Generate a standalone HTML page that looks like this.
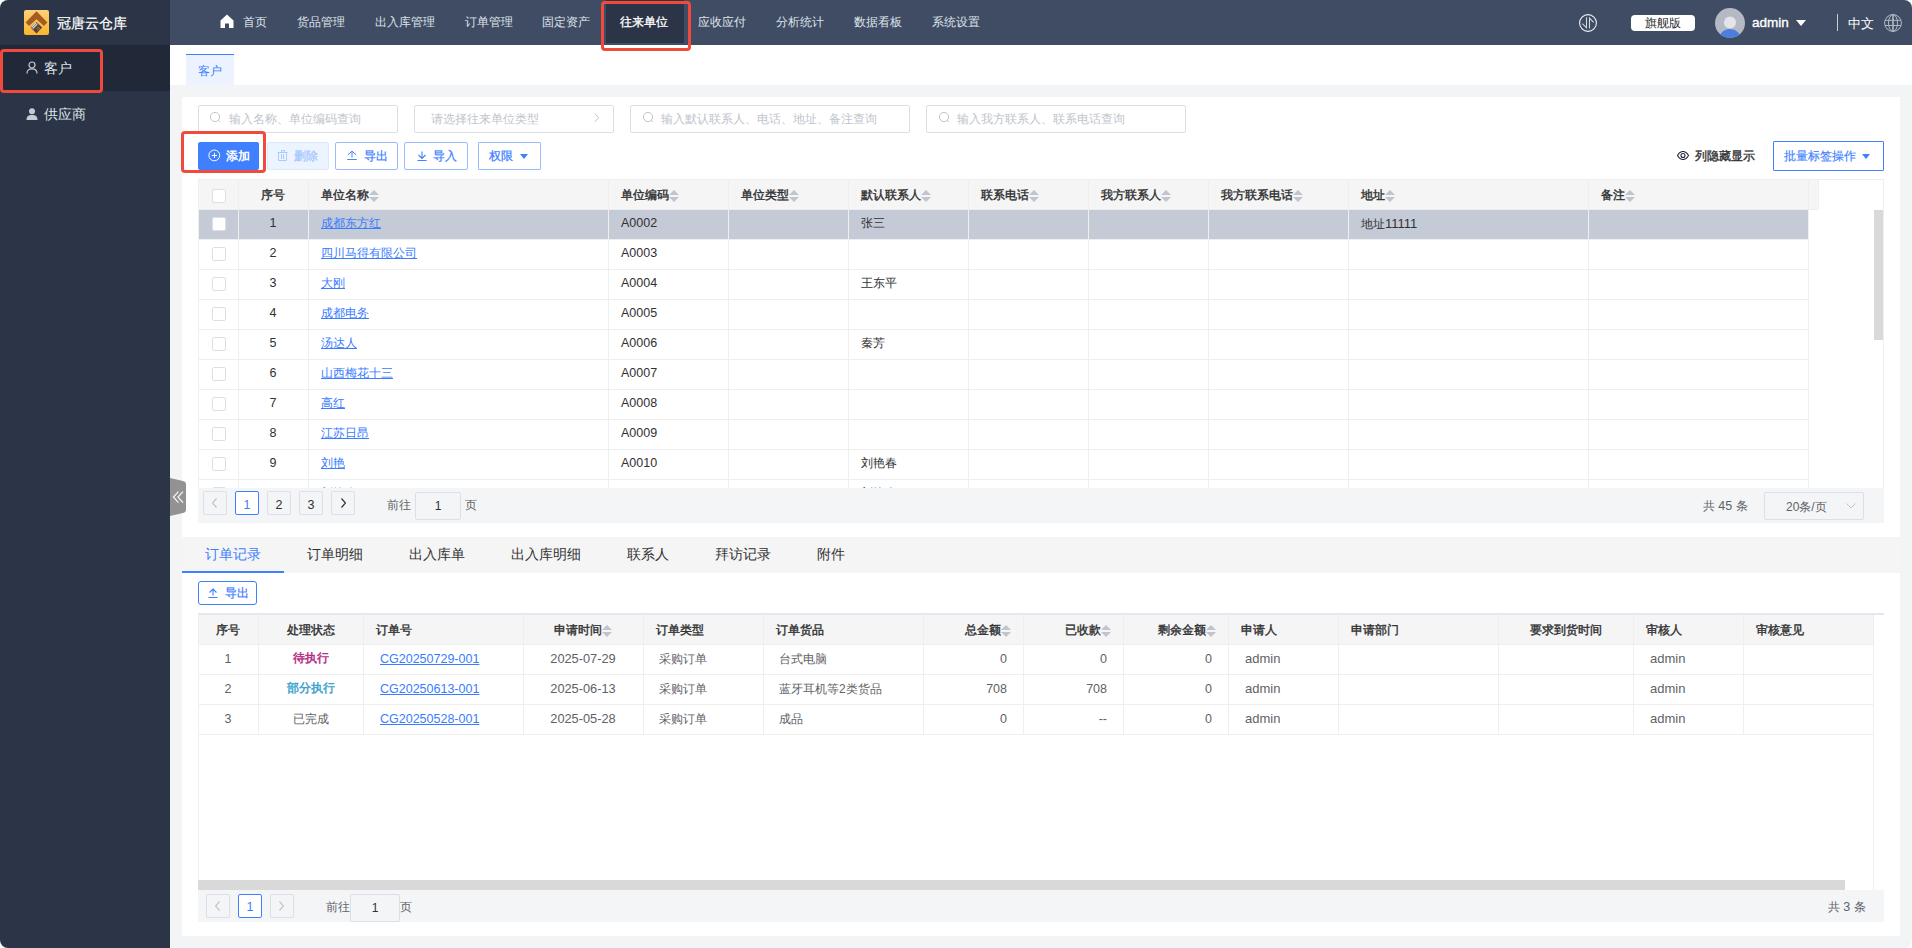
<!DOCTYPE html><html><head><meta charset="utf-8"><style>
*{box-sizing:border-box;margin:0;padding:0}
html,body{width:1912px;height:948px;overflow:hidden;background:#fff}
body{font-family:"Liberation Sans",sans-serif;font-size:12px;color:#303133;position:relative}
.ab{position:absolute}
.win{position:absolute;left:0;top:0;width:1912px;height:948px;border-radius:8px;overflow:hidden;background:#f3f4f6}
.t{position:absolute;white-space:nowrap}
.nav{position:absolute;top:0;height:45px;line-height:45px;font-size:12px;color:#dfe3ea}
.inp{position:absolute;top:105px;height:28px;border:1px solid #dcdfe6;border-radius:2px;background:#fff;color:#c0c4cc;font-size:12px;line-height:26px}
.btn{position:absolute;top:142px;height:28px;border:1px solid #9abbff;border-radius:2px;background:#fff;color:#4080ff;font-size:12px;line-height:26px}
.hd{position:absolute;-webkit-text-stroke:0.4px #303133;font-size:12px;color:#303133;white-space:nowrap}
.caret{display:inline-block;width:10px;height:14px;position:relative;vertical-align:middle;margin-top:-2px}
.caret:before{content:"";position:absolute;left:0;top:2px;border:5px solid transparent;border-bottom-color:#c0c4cc;border-top-width:0}
.caret:after{content:"";position:absolute;left:0;top:9px;border:5px solid transparent;border-top-color:#c0c4cc;border-bottom-width:0}
.vl{position:absolute;width:1px;background:#efefef}
.hl{position:absolute;height:1px;background:#efefef}
.cb{position:absolute;width:14px;height:14px;border:1px solid #dcdfe6;border-radius:2px;background:#fff}
.lnk{color:#3a7cff;text-decoration:underline}
.pg{position:absolute;height:23px;border:1px solid #dcdfe6;border-radius:2px;text-align:center;line-height:21px;font-size:12px;color:#303133}
.md{-webkit-text-stroke:0.25px currentColor}
.red{position:absolute;border:3px solid #ef4a3c;border-radius:4px}
</style></head><body><div class="win">
<div class="ab" style="left:0;top:0;width:170px;height:948px;background:#2c3547"></div>
<svg class="ab" style="left:24px;top:10px" width="25" height="25" viewBox="0 0 25 25">
<defs><linearGradient id="lg" x1="0" y1="0" x2="0" y2="1"><stop offset="0" stop-color="#fdd07a"/><stop offset="1" stop-color="#fbb52c"/></linearGradient></defs>
<rect x="0" y="0" width="25" height="25" rx="2" fill="url(#lg)"/>
<path d="M12.5 1.3 L23.4 12.4 L19.9 16 L12.5 9.2 L5.1 16 L1.6 12.4 Z" fill="#a65a24"/>
<path d="M12.5 12 L18.2 17.5 L12.5 23.4 L6.7 17.5 Z" fill="#5e4030"/>
<path d="M6.7 17.5 L12.5 12 L14.6 14.1 L8.9 19.7 Z" fill="#8a8580"/>
<path d="M8 16.8 L12 13 M9 18.2 L13 14.4" stroke="#f2f0ee" stroke-width="0.9"/>
<path d="M12.5 19 L15 16.5 M13.5 20.5 L16 18" stroke="#b59f90" stroke-width="0.7"/>
</svg>
<div class="t" style="left:57px;top:13px;font-size:14px;line-height:20px;color:#fff;-webkit-text-stroke:0.2px #fff">冠唐云仓库</div>
<div class="ab" style="left:0;top:45px;width:170px;height:46px;background:#212939"></div>
<svg class="ab" style="left:26px;top:61px" width="12" height="13" viewBox="0 0 12 13"><circle cx="6" cy="4" r="3" fill="none" stroke="#c6cbd4" stroke-width="1.2"/><path d="M1 12.5 C1 9 3 7.8 6 7.8 C9 7.8 11 9 11 12.5" fill="none" stroke="#c6cbd4" stroke-width="1.2"/></svg>
<div class="t" style="left:44px;top:58px;font-size:14px;line-height:20px;color:#dfe3ea">客户</div>
<svg class="ab" style="left:26px;top:108px" width="12" height="12" viewBox="0 0 12 12"><circle cx="6" cy="3.3" r="3" fill="#c6cbd4"/><path d="M0.5 12 C0.5 8.3 2.5 7 6 7 C9.5 7 11.5 8.3 11.5 12 Z" fill="#c6cbd4"/></svg>
<div class="t" style="left:44px;top:104px;font-size:14px;line-height:20px;color:#dfe3ea">供应商</div>
<div class="ab" style="left:170px;top:0;width:1742px;height:45px;background:#3f4c64"></div>
<div class="ab" style="left:606px;top:0;width:78px;height:43px;background:#2c3547"></div>
<svg class="ab" style="left:220px;top:14px" width="14" height="14" viewBox="0 0 14 14"><path d="M7 0.5 L13.5 6.5 L13.5 14 L9 14 L9 9.5 L5 9.5 L5 14 L0.5 14 L0.5 6.5 Z" fill="#fff"/></svg>
<div class="nav" style="left:243px;color:#dfe3ea">首页</div>
<div class="nav" style="left:297px;color:#dfe3ea">货品管理</div>
<div class="nav" style="left:375px;color:#dfe3ea">出入库管理</div>
<div class="nav" style="left:465px;color:#dfe3ea">订单管理</div>
<div class="nav" style="left:542px;color:#dfe3ea">固定资产</div>
<div class="nav" style="left:620px;color:#fff;-webkit-text-stroke:0.3px #fff">往来单位</div>
<div class="nav" style="left:698px;color:#dfe3ea">应收应付</div>
<div class="nav" style="left:776px;color:#dfe3ea">分析统计</div>
<div class="nav" style="left:854px;color:#dfe3ea">数据看板</div>
<div class="nav" style="left:932px;color:#dfe3ea">系统设置</div>
<svg class="ab" style="left:1579px;top:14px" width="18" height="18" viewBox="0 0 18 18"><circle cx="9" cy="9" r="8.4" fill="none" stroke="#f0f2f5" stroke-width="1.1"/><path d="M3.4 9.6 L7.5 13.8 V3.3 M10.5 14.6 V4.1 L14.6 8.3" fill="none" stroke="#d6dae0" stroke-width="1.05"/></svg>
<div class="ab" style="left:1631px;top:15px;width:64px;height:16px;background:#fff;border-radius:4px;text-align:center;line-height:16px;font-size:12px;color:#303133">旗舰版</div>
<svg class="ab" style="left:1715px;top:8px" width="30" height="30" viewBox="0 0 30 30"><defs><clipPath id="av"><circle cx="15" cy="15" r="15"/></clipPath></defs><circle cx="15" cy="15" r="15" fill="#b4b9c4"/><g clip-path="url(#av)"><circle cx="15" cy="14.5" r="6" fill="#e4e5ea"/><ellipse cx="15" cy="31.5" rx="11" ry="10.5" fill="#4a7fe0"/></g></svg>
<div class="t" style="left:1752px;top:13px;font-size:13.5px;line-height:20px;color:#fff;-webkit-text-stroke:0.35px #fff">admin</div>
<div class="ab" style="left:1796px;top:20px;width:0;height:0;border-left:5px solid transparent;border-right:5px solid transparent;border-top:6px solid #fff"></div>
<div class="ab" style="left:1837px;top:14px;width:1px;height:17px;background:#c8ccd4"></div>
<div class="t" style="left:1848px;top:13.5px;font-size:13px;line-height:20px;color:#fff">中文</div>
<svg class="ab" style="left:1884px;top:14px" width="18" height="18" viewBox="0 0 18 18" fill="none" stroke="#b3b9c4" stroke-width="1"><circle cx="9" cy="9" r="8.4"/><ellipse cx="9" cy="9" rx="4.5" ry="8.4"/><path d="M9 0.6 V17.4" stroke-width="1.6"/><path d="M1.2 6.3 H16.8 M1.2 11.5 H16.8"/></svg>
<div class="ab" style="left:170px;top:45px;width:1742px;height:40px;background:#fff"></div>
<div class="ab" style="left:186px;top:54px;width:48px;height:31px;background:#ecf3fe;border-top:1.3px solid #4080ff;text-align:center;line-height:33px;font-size:12px;color:#4080ff">客户</div>
<div class="ab" style="left:182px;top:97px;width:1718px;height:839px;background:#fff"></div>
<div class="inp" style="left:198px;width:200px"></div>
<svg class="ab" style="left:210px;top:112px" width="12" height="12" viewBox="0 0 12 12" fill="none" stroke="#c0c4cc" stroke-width="1"><circle cx="5" cy="5" r="4.6"/><path d="M8.3 8.3 L10 10"/></svg>
<div class="t" style="left:229px;top:105px;line-height:28px;color:#c0c4cc">输入名称、单位编码查询</div>
<div class="inp" style="left:414px;width:200px"></div>
<div class="t" style="left:431px;top:105px;line-height:28px;color:#c0c4cc">请选择往来单位类型</div>
<svg class="ab" style="left:594px;top:113px" width="6" height="10" viewBox="0 0 6 10" fill="none" stroke="#c0c4cc" stroke-width="1"><path d="M0.6 0.5 L4.9 4.7 L0.6 8.9"/></svg>
<div class="inp" style="left:630px;width:280px"></div>
<svg class="ab" style="left:643px;top:112px" width="12" height="12" viewBox="0 0 12 12" fill="none" stroke="#c0c4cc" stroke-width="1"><circle cx="5" cy="5" r="4.6"/><path d="M8.3 8.3 L10 10"/></svg>
<div class="t" style="left:661px;top:105px;line-height:28px;color:#c0c4cc">输入默认联系人、电话、地址、备注查询</div>
<div class="inp" style="left:926px;width:260px"></div>
<svg class="ab" style="left:939px;top:112px" width="12" height="12" viewBox="0 0 12 12" fill="none" stroke="#c0c4cc" stroke-width="1"><circle cx="5" cy="5" r="4.6"/><path d="M8.3 8.3 L10 10"/></svg>
<div class="t" style="left:957px;top:105px;line-height:28px;color:#c0c4cc">输入我方联系人、联系电话查询</div>
<div class="btn" style="left:198px;width:61px;background:#4080ff;border-color:#4080ff"></div>
<svg class="ab" style="left:208px;top:149px" width="13" height="13" viewBox="0 0 13 13" fill="none" stroke="#fff" stroke-width="1"><circle cx="6.3" cy="6.4" r="5.4"/><path d="M6.5 3.8 V9 M3.8 6.5 H9"/></svg>
<div class="t" style="left:226px;top:142px;line-height:28px;color:#fff;font-weight:bold">添加</div>
<div class="btn" style="left:267px;width:62px;background:#ecf4ff;border-color:#d9e8ff"></div>
<svg class="ab" style="left:277px;top:150px" width="12" height="12" viewBox="0 0 12 12" fill="none" stroke="#a8ccff" stroke-width="1"><path d="M0.7 2.5 H10.6 M4.5 2.5 V0.5 H7.5 V2.5 M1.5 2.5 V10.5 H9.5 V2.5 M4.5 4 V9 M6.5 4 V9"/></svg>
<div class="t" style="left:294px;top:142px;line-height:28px;color:#a3c5ff;-webkit-text-stroke:0.25px currentColor">删除</div>
<div class="btn" style="left:335px;width:63px"></div>
<svg class="ab" style="left:347px;top:150px" width="10" height="10" viewBox="0 0 10 10" fill="none" stroke="#4080ff" stroke-width="0.95"><path d="M1 4.6 L5 1.2 L9 4.6 M5 1.2 V7.6 M0.2 9.5 H9.8"/></svg>
<div class="t" style="left:364px;top:142px;line-height:28px;color:#4080ff;-webkit-text-stroke:0.25px currentColor">导出</div>
<div class="btn" style="left:404px;width:64px"></div>
<svg class="ab" style="left:417px;top:151px" width="10" height="10" viewBox="0 0 10 10" fill="none" stroke="#4080ff" stroke-width="1.1"><path d="M1.5 4 L5 7.5 L8.5 4 M5 0.5 V7.5 M0.5 9.5 H9.5"/></svg>
<div class="t" style="left:433px;top:142px;line-height:28px;color:#4080ff;-webkit-text-stroke:0.25px currentColor">导入</div>
<div class="btn" style="left:478px;width:63px;border-radius:1px"></div>
<div class="t" style="left:489px;top:142px;line-height:28px;color:#4080ff;-webkit-text-stroke:0.25px currentColor">权限</div>
<div class="ab" style="left:520px;top:154px;border-left:4px solid transparent;border-right:4px solid transparent;border-top:5px solid #4080ff"></div>
<svg class="ab" style="left:1677px;top:151px" width="12" height="9" viewBox="0 0 12 9" fill="none" stroke="#1f2533" stroke-width="1.1"><path d="M0.5 4.5 C2.5 1 4 0.5 6 0.5 C8 0.5 9.5 1 11.5 4.5 C9.5 8 8 8.5 6 8.5 C4 8.5 2.5 8 0.5 4.5 Z"/><circle cx="6" cy="4.5" r="2"/></svg>
<div class="t" style="left:1695px;top:142px;line-height:28px;color:#303133;-webkit-text-stroke:0.35px currentColor">列隐藏显示</div>
<div class="btn" style="left:1773px;top:141px;height:30px;width:111px;border-radius:1px;border-color:#4080ff"></div>
<div class="t" style="left:1784px;top:142px;line-height:28px;color:#4080ff;-webkit-text-stroke:0.15px currentColor">批量标签操作</div>
<div class="ab" style="left:1862px;top:154px;border-left:4px solid transparent;border-right:4px solid transparent;border-top:5px solid #4080ff"></div>
<div class="ab" style="left:198px;top:179px;width:1620px;height:31px;background:#f5f5f5"></div>
<div class="ab" style="left:1818px;top:179px;width:65px;height:31px;background:#fff"></div>
<div class="ab" style="left:1883px;top:179px;width:1px;height:309px;background:#ebeef5"></div>
<div class="ab" style="left:198px;top:210px;width:1610px;height:29px;background:#c4cad6"></div>
<div class="ab" style="left:198px;top:179px;width:1685px;height:309px;overflow:hidden">
<div class="hl" style="left:0;top:30px;width:1610px"></div>
<div class="hl" style="left:0;top:60px;width:1610px"></div>
<div class="hl" style="left:0;top:90px;width:1610px"></div>
<div class="hl" style="left:0;top:120px;width:1610px"></div>
<div class="hl" style="left:0;top:150px;width:1610px"></div>
<div class="hl" style="left:0;top:180px;width:1610px"></div>
<div class="hl" style="left:0;top:210px;width:1610px"></div>
<div class="hl" style="left:0;top:240px;width:1610px"></div>
<div class="hl" style="left:0;top:270px;width:1610px"></div>
<div class="hl" style="left:0;top:300px;width:1610px"></div>
<div class="hl" style="left:0;top:330px;width:1610px"></div>
<div class="vl" style="left:0px;top:0;height:309px"></div>
<div class="vl" style="left:40px;top:0;height:309px"></div>
<div class="vl" style="left:110px;top:0;height:309px"></div>
<div class="vl" style="left:410px;top:0;height:309px"></div>
<div class="vl" style="left:530px;top:0;height:309px"></div>
<div class="vl" style="left:650px;top:0;height:309px"></div>
<div class="vl" style="left:770px;top:0;height:309px"></div>
<div class="vl" style="left:890px;top:0;height:309px"></div>
<div class="vl" style="left:1010px;top:0;height:309px"></div>
<div class="vl" style="left:1150px;top:0;height:309px"></div>
<div class="vl" style="left:1390px;top:0;height:309px"></div>
<div class="vl" style="left:1610px;top:0;height:309px"></div>
<div class="vl" style="left:1620px;top:0;height:31px"></div>
<div class="hl" style="left:1610px;top:30px;width:11px"></div>
<div class="hl" style="left:0;top:0;width:1685px"></div>
<div class="cb" style="left:14px;top:10px"></div>
<div class="hd" style="left:40px;width:70px;text-align:center;top:1px;line-height:31px">序号</div>
<div class="hd" style="left:123px;top:1px;line-height:31px">单位名称<span class="caret"></span></div>
<div class="hd" style="left:423px;top:1px;line-height:31px">单位编码<span class="caret"></span></div>
<div class="hd" style="left:543px;top:1px;line-height:31px">单位类型<span class="caret"></span></div>
<div class="hd" style="left:663px;top:1px;line-height:31px">默认联系人<span class="caret"></span></div>
<div class="hd" style="left:783px;top:1px;line-height:31px">联系电话<span class="caret"></span></div>
<div class="hd" style="left:903px;top:1px;line-height:31px">我方联系人<span class="caret"></span></div>
<div class="hd" style="left:1023px;top:1px;line-height:31px">我方联系电话<span class="caret"></span></div>
<div class="hd" style="left:1163px;top:1px;line-height:31px">地址<span class="caret"></span></div>
<div class="hd" style="left:1403px;top:1px;line-height:31px">备注<span class="caret"></span></div>
<div class="cb" style="left:14px;top:38px"></div>
<div class="t" style="left:40px;width:70px;text-align:center;top:30px;line-height:29px;color:#303133;font-size:12.5px">1</div>
<div class="t lnk" style="left:123px;top:30px;line-height:29px">成都东方红</div>
<div class="t" style="left:423px;top:30px;line-height:29px;color:#303133;font-size:12.5px">A0002</div>
<div class="t" style="left:663px;top:30px;line-height:29px;color:#303133">张三</div>
<div class="t" style="left:1163px;top:30px;line-height:29px;color:#303133">地址<span style="font-size:13px">11111</span></div>
<div class="cb" style="left:14px;top:68px"></div>
<div class="t" style="left:40px;width:70px;text-align:center;top:60px;line-height:29px;color:#303133;font-size:12.5px">2</div>
<div class="t lnk" style="left:123px;top:60px;line-height:29px">四川马得有限公司</div>
<div class="t" style="left:423px;top:60px;line-height:29px;color:#303133;font-size:12.5px">A0003</div>
<div class="cb" style="left:14px;top:98px"></div>
<div class="t" style="left:40px;width:70px;text-align:center;top:90px;line-height:29px;color:#303133;font-size:12.5px">3</div>
<div class="t lnk" style="left:123px;top:90px;line-height:29px">大刚</div>
<div class="t" style="left:423px;top:90px;line-height:29px;color:#303133;font-size:12.5px">A0004</div>
<div class="t" style="left:663px;top:90px;line-height:29px;color:#303133">王东平</div>
<div class="cb" style="left:14px;top:128px"></div>
<div class="t" style="left:40px;width:70px;text-align:center;top:120px;line-height:29px;color:#303133;font-size:12.5px">4</div>
<div class="t lnk" style="left:123px;top:120px;line-height:29px">成都电务</div>
<div class="t" style="left:423px;top:120px;line-height:29px;color:#303133;font-size:12.5px">A0005</div>
<div class="cb" style="left:14px;top:158px"></div>
<div class="t" style="left:40px;width:70px;text-align:center;top:150px;line-height:29px;color:#303133;font-size:12.5px">5</div>
<div class="t lnk" style="left:123px;top:150px;line-height:29px">汤达人</div>
<div class="t" style="left:423px;top:150px;line-height:29px;color:#303133;font-size:12.5px">A0006</div>
<div class="t" style="left:663px;top:150px;line-height:29px;color:#303133">秦芳</div>
<div class="cb" style="left:14px;top:188px"></div>
<div class="t" style="left:40px;width:70px;text-align:center;top:180px;line-height:29px;color:#303133;font-size:12.5px">6</div>
<div class="t lnk" style="left:123px;top:180px;line-height:29px">山西梅花十三</div>
<div class="t" style="left:423px;top:180px;line-height:29px;color:#303133;font-size:12.5px">A0007</div>
<div class="cb" style="left:14px;top:218px"></div>
<div class="t" style="left:40px;width:70px;text-align:center;top:210px;line-height:29px;color:#303133;font-size:12.5px">7</div>
<div class="t lnk" style="left:123px;top:210px;line-height:29px">高红</div>
<div class="t" style="left:423px;top:210px;line-height:29px;color:#303133;font-size:12.5px">A0008</div>
<div class="cb" style="left:14px;top:248px"></div>
<div class="t" style="left:40px;width:70px;text-align:center;top:240px;line-height:29px;color:#303133;font-size:12.5px">8</div>
<div class="t lnk" style="left:123px;top:240px;line-height:29px">江苏日昂</div>
<div class="t" style="left:423px;top:240px;line-height:29px;color:#303133;font-size:12.5px">A0009</div>
<div class="cb" style="left:14px;top:278px"></div>
<div class="t" style="left:40px;width:70px;text-align:center;top:270px;line-height:29px;color:#303133;font-size:12.5px">9</div>
<div class="t lnk" style="left:123px;top:270px;line-height:29px">刘艳</div>
<div class="t" style="left:423px;top:270px;line-height:29px;color:#303133;font-size:12.5px">A0010</div>
<div class="t" style="left:663px;top:270px;line-height:29px;color:#303133">刘艳春</div>
<div class="cb" style="left:14px;top:308px"></div>
<div class="t" style="left:40px;width:70px;text-align:center;top:300px;line-height:29px;color:#303133;font-size:12.5px">10</div>
<div class="t lnk" style="left:123px;top:300px;line-height:29px">刘艳春</div>
<div class="t" style="left:423px;top:300px;line-height:29px;color:#303133;font-size:12.5px">A0011</div>
<div class="t" style="left:663px;top:300px;line-height:29px;color:#303133">刘艳春</div>
</div>
<div class="ab" style="left:1874px;top:210px;width:9px;height:130px;background:#d9d9d9"></div>
<div class="ab" style="left:198px;top:488px;width:1686px;height:35px;background:#f4f5f7"></div>
<div class="pg" style="left:203px;top:491px;width:24px;height:24px"></div><svg class="ab" style="left:211.5px;top:498px" width="5" height="10" viewBox="0 0 5 10" fill="none" stroke="#c0c4cc" stroke-width="1.2"><path d="M4.5 0.5 L0.5 5 L4.5 9.5"/></svg>
<div class="pg" style="left:235px;top:491px;width:24px;height:24px;line-height:26px;border-color:#4080ff;background:#fff;color:#4080ff;font-size:12.5px">1</div>
<div class="pg" style="left:267px;top:491px;width:24px;height:24px;line-height:26px;font-size:12.5px">2</div>
<div class="pg" style="left:299px;top:491px;width:24px;height:24px;line-height:26px;font-size:12.5px">3</div>
<div class="pg" style="left:331px;top:491px;width:24px;height:24px"></div><svg class="ab" style="left:341px;top:497.5px" width="5" height="10" viewBox="0 0 5 10" fill="none" stroke="#303133" stroke-width="1.2"><path d="M0.5 0.5 L4.5 5 L0.5 9.5"/></svg>
<div class="t" style="left:387px;top:492px;line-height:26px;color:#606266">前往</div>
<div class="pg" style="left:415px;top:492px;width:46px;height:28px;line-height:26px;background:#f4f5f7">1</div>
<div class="t" style="left:465px;top:492px;line-height:26px;color:#606266">页</div>
<div class="t" style="left:1703px;top:493px;line-height:26px;color:#606266">共 <span style="font-size:12.5px">45</span> 条</div>
<div class="pg" style="left:1764px;top:492px;width:100px;height:28px;line-height:28px;text-align:left;padding-left:21px;color:#606266">20条/页</div>
<svg class="ab" style="left:1846px;top:503px" width="10" height="6" viewBox="0 0 10 6" fill="none" stroke="#c0c4cc" stroke-width="1"><path d="M0.5 0.5 L5 5 L9.5 0.5"/></svg>
<div class="ab" style="left:182px;top:537px;width:1718px;height:36px;background:#f5f5f5"></div>
<div class="ab" style="left:182px;top:571px;width:102px;height:2px;background:#4080ff"></div>
<div class="t" style="left:182px;width:102px;text-align:center;top:537px;line-height:34px;font-size:14px;color:#4080ff">订单记录</div>
<div class="t" style="left:284px;width:102px;text-align:center;top:537px;line-height:34px;font-size:14px;color:#303133">订单明细</div>
<div class="t" style="left:386px;width:102px;text-align:center;top:537px;line-height:34px;font-size:14px;color:#303133">出入库单</div>
<div class="t" style="left:488px;width:116px;text-align:center;top:537px;line-height:34px;font-size:14px;color:#303133">出入库明细</div>
<div class="t" style="left:604px;width:88px;text-align:center;top:537px;line-height:34px;font-size:14px;color:#303133">联系人</div>
<div class="t" style="left:692px;width:102px;text-align:center;top:537px;line-height:34px;font-size:14px;color:#303133">拜访记录</div>
<div class="t" style="left:794px;width:74px;text-align:center;top:537px;line-height:34px;font-size:14px;color:#303133">附件</div>
<div class="ab" style="left:198px;top:581px;width:59px;height:24px;border:1px solid #4080ff;border-radius:3px;background:#fff"></div>
<svg class="ab" style="left:208px;top:588px" width="10" height="10" viewBox="0 0 10 10" fill="none" stroke="#4080ff" stroke-width="1.1"><path d="M1.5 4.5 L5 1 L8.5 4.5 M5 1 V7.5 M0.5 9.5 H9.5"/></svg>
<div class="t" style="left:225px;top:581px;line-height:24px;color:#4080ff;-webkit-text-stroke:0.25px currentColor">导出</div>
<div class="ab" style="left:198px;top:613px;width:1676px;height:277px;border:1px solid #ebeef5;border-bottom:none"></div>
<div class="ab" style="left:198px;top:613px;width:1686px;height:2px;background:#e4e7ef"></div>
<div class="ab" style="left:199px;top:615px;width:1674px;height:29px;background:#f5f5f5"></div>
<div class="hl" style="left:198px;top:644px;width:1675px"></div>
<div class="hl" style="left:198px;top:674px;width:1675px"></div>
<div class="hl" style="left:198px;top:704px;width:1675px"></div>
<div class="hl" style="left:198px;top:734px;width:1675px"></div>
<div class="vl" style="left:258px;top:614px;height:120px"></div>
<div class="vl" style="left:363px;top:614px;height:120px"></div>
<div class="vl" style="left:523px;top:614px;height:120px"></div>
<div class="vl" style="left:643px;top:614px;height:120px"></div>
<div class="vl" style="left:763px;top:614px;height:120px"></div>
<div class="vl" style="left:923px;top:614px;height:120px"></div>
<div class="vl" style="left:1023px;top:614px;height:120px"></div>
<div class="vl" style="left:1123px;top:614px;height:120px"></div>
<div class="vl" style="left:1228px;top:614px;height:120px"></div>
<div class="vl" style="left:1338px;top:614px;height:120px"></div>
<div class="vl" style="left:1498px;top:614px;height:120px"></div>
<div class="vl" style="left:1633px;top:614px;height:120px"></div>
<div class="vl" style="left:1743px;top:614px;height:120px"></div>
<div class="hd" style="left:198px;width:60px;text-align:center;top:615px;line-height:30px">序号</div>
<div class="hd" style="left:258px;width:105px;text-align:center;top:615px;line-height:30px">处理状态</div>
<div class="hd" style="left:376px;top:615px;line-height:30px">订单号</div>
<div class="hd" style="left:523px;width:120px;text-align:center;top:615px;line-height:30px">申请时间<span class="caret"></span></div>
<div class="hd" style="left:656px;top:615px;line-height:30px">订单类型</div>
<div class="hd" style="left:776px;top:615px;line-height:30px">订单货品</div>
<div class="hd" style="left:923px;width:88px;text-align:right;top:615px;line-height:30px">总金额<span class="caret"></span></div>
<div class="hd" style="left:1023px;width:88px;text-align:right;top:615px;line-height:30px">已收款<span class="caret"></span></div>
<div class="hd" style="left:1123px;width:93px;text-align:right;top:615px;line-height:30px">剩余金额<span class="caret"></span></div>
<div class="hd" style="left:1241px;top:615px;line-height:30px">申请人</div>
<div class="hd" style="left:1351px;top:615px;line-height:30px">申请部门</div>
<div class="hd" style="left:1498px;width:135px;text-align:center;top:615px;line-height:30px">要求到货时间</div>
<div class="hd" style="left:1646px;top:615px;line-height:30px">审核人</div>
<div class="hd" style="left:1756px;top:615px;line-height:30px">审核意见</div>
<div class="t" style="left:198px;width:60px;text-align:center;top:645px;line-height:29px;color:#606266;font-size:12.5px">1</div>
<div class="t" style="left:258px;width:105px;text-align:center;top:645px;line-height:29px;-webkit-text-stroke:0.45px currentColor;margin-top:-1px;color:#b42a82">待执行</div>
<div class="t lnk" style="left:380px;top:645px;line-height:29px;font-size:12.5px">CG20250729-001</div>
<div class="t" style="left:523px;width:120px;text-align:center;top:645px;line-height:29px;color:#606266;font-size:12.8px;margin-top:-1px">2025-07-29</div>
<div class="t" style="left:659px;top:645px;line-height:29px;color:#606266">采购订单</div>
<div class="t" style="left:779px;top:645px;line-height:29px;color:#606266">台式电脑</div>
<div class="t" style="left:923px;width:84px;text-align:right;top:645px;line-height:29px;color:#606266;font-size:12.5px">0</div>
<div class="t" style="left:1023px;width:84px;text-align:right;top:645px;line-height:29px;color:#606266;font-size:12.5px">0</div>
<div class="t" style="left:1123px;width:89px;text-align:right;top:645px;line-height:29px;color:#606266;font-size:12.5px">0</div>
<div class="t" style="left:1245px;top:645px;line-height:29px;color:#606266;font-size:13px;margin-top:-1px">admin</div>
<div class="t" style="left:1650px;top:645px;line-height:29px;color:#606266;font-size:13px;margin-top:-1px">admin</div>
<div class="t" style="left:198px;width:60px;text-align:center;top:675px;line-height:29px;color:#606266;font-size:12.5px">2</div>
<div class="t" style="left:258px;width:105px;text-align:center;top:675px;line-height:29px;-webkit-text-stroke:0.45px currentColor;margin-top:-1px;color:#3aa2cc">部分执行</div>
<div class="t lnk" style="left:380px;top:675px;line-height:29px;font-size:12.5px">CG20250613-001</div>
<div class="t" style="left:523px;width:120px;text-align:center;top:675px;line-height:29px;color:#606266;font-size:12.8px;margin-top:-1px">2025-06-13</div>
<div class="t" style="left:659px;top:675px;line-height:29px;color:#606266">采购订单</div>
<div class="t" style="left:779px;top:675px;line-height:29px;color:#606266">蓝牙耳机等2类货品</div>
<div class="t" style="left:923px;width:84px;text-align:right;top:675px;line-height:29px;color:#606266;font-size:12.5px">708</div>
<div class="t" style="left:1023px;width:84px;text-align:right;top:675px;line-height:29px;color:#606266;font-size:12.5px">708</div>
<div class="t" style="left:1123px;width:89px;text-align:right;top:675px;line-height:29px;color:#606266;font-size:12.5px">0</div>
<div class="t" style="left:1245px;top:675px;line-height:29px;color:#606266;font-size:13px;margin-top:-1px">admin</div>
<div class="t" style="left:1650px;top:675px;line-height:29px;color:#606266;font-size:13px;margin-top:-1px">admin</div>
<div class="t" style="left:198px;width:60px;text-align:center;top:705px;line-height:29px;color:#606266;font-size:12.5px">3</div>
<div class="t" style="left:258px;width:105px;text-align:center;top:705px;line-height:29px;color:#606266">已完成</div>
<div class="t lnk" style="left:380px;top:705px;line-height:29px;font-size:12.5px">CG20250528-001</div>
<div class="t" style="left:523px;width:120px;text-align:center;top:705px;line-height:29px;color:#606266;font-size:12.8px;margin-top:-1px">2025-05-28</div>
<div class="t" style="left:659px;top:705px;line-height:29px;color:#606266">采购订单</div>
<div class="t" style="left:779px;top:705px;line-height:29px;color:#606266">成品</div>
<div class="t" style="left:923px;width:84px;text-align:right;top:705px;line-height:29px;color:#606266;font-size:12.5px">0</div>
<div class="t" style="left:1023px;width:84px;text-align:right;top:705px;line-height:29px;color:#606266;font-size:12.5px">--</div>
<div class="t" style="left:1123px;width:89px;text-align:right;top:705px;line-height:29px;color:#606266;font-size:12.5px">0</div>
<div class="t" style="left:1245px;top:705px;line-height:29px;color:#606266;font-size:13px;margin-top:-1px">admin</div>
<div class="t" style="left:1650px;top:705px;line-height:29px;color:#606266;font-size:13px;margin-top:-1px">admin</div>
<div class="ab" style="left:198px;top:880px;width:1647px;height:10px;background:#d9d9d9"></div>
<div class="ab" style="left:198px;top:890px;width:1686px;height:32px;background:#f4f5f7"></div>
<div class="pg" style="left:206px;top:894px;width:24px;height:24px"></div><svg class="ab" style="left:215px;top:901px" width="5" height="10" viewBox="0 0 5 10" fill="none" stroke="#c0c4cc" stroke-width="1.2"><path d="M4.5 0.5 L0.5 5 L4.5 9.5"/></svg>
<div class="pg" style="left:238px;top:894px;width:24px;height:24px;line-height:24px;border-color:#4080ff;background:#fff;color:#4080ff;font-size:12.5px">1</div>
<div class="pg" style="left:270px;top:894px;width:24px;height:24px"></div><svg class="ab" style="left:279px;top:901px" width="5" height="10" viewBox="0 0 5 10" fill="none" stroke="#c0c4cc" stroke-width="1.2"><path d="M0.5 0.5 L4.5 5 L0.5 9.5"/></svg>
<div class="t" style="left:326px;top:894px;line-height:26px;color:#606266">前往</div>
<div class="pg" style="left:350px;top:894px;width:50px;height:28px;line-height:26px">1</div>
<div class="t" style="left:400px;top:894px;line-height:26px;color:#606266">页</div>
<div class="t" style="left:1828px;top:894px;line-height:26px;color:#606266">共 <span style="font-size:12.5px">3</span> 条</div>
<svg class="ab" style="left:170px;top:478px" width="16" height="38" viewBox="0 0 16 38"><path d="M0 0 L13 3 Q16 3.5 16 6.5 L16 31.5 Q16 34.5 13 35 L0 38 Z" fill="#929292"/><path d="M8.4 13.6 L3.4 19 L8.4 24.6 M13 13.6 L8 19 L13 24.6" fill="none" stroke="#f4f4f4" stroke-width="1.25"/></svg>
<div class="red" style="left:0;top:49px;width:103px;height:44px"></div>
<div class="red" style="left:601px;top:1px;width:90px;height:50px"></div>
<div class="red" style="left:181px;top:131px;width:85px;height:42px"></div>
</div></body></html>
